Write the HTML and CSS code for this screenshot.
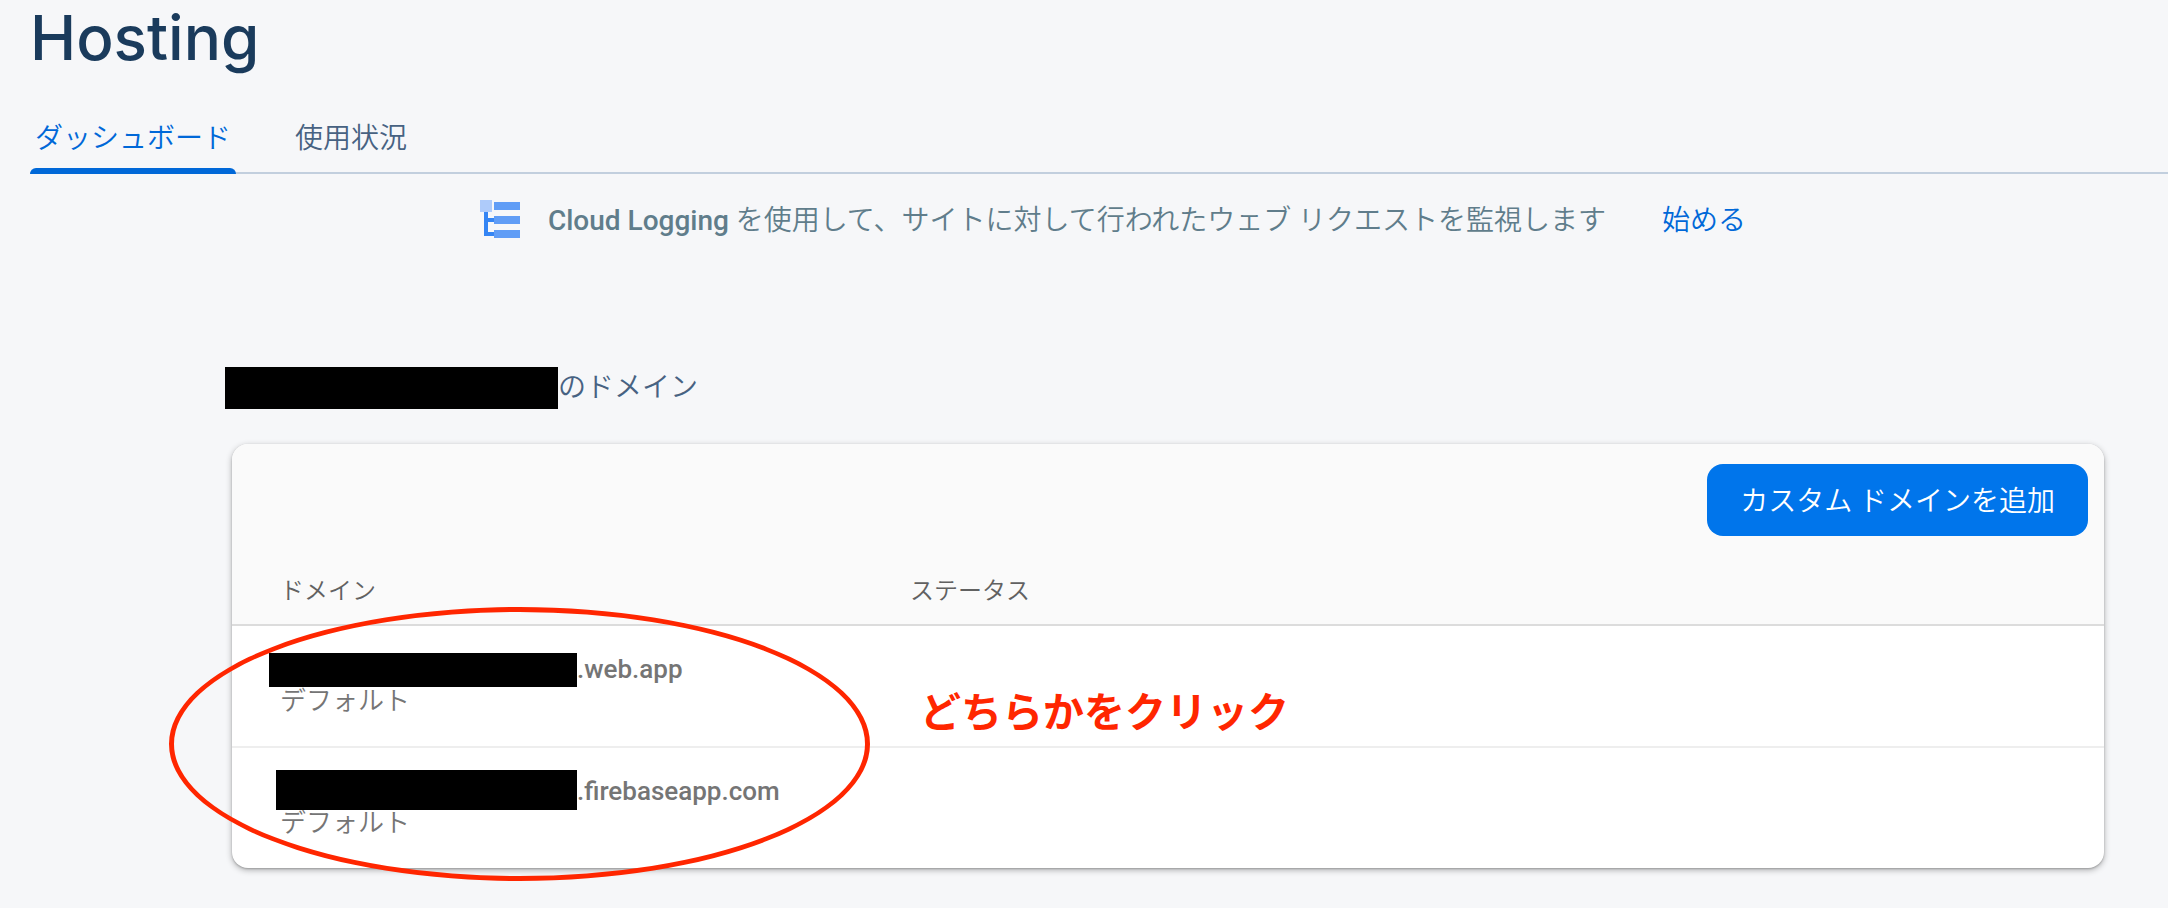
FILE: index.html
```html
<!DOCTYPE html>
<html lang="ja">
<head>
  <meta charset="UTF-8" />
  <meta name="viewport" content="width=device-width, initial-scale=1.0"/>
  <title>Hosting</title>
  <link rel="stylesheet" href="styles.css">
</head>
<body>
  <header class="header">
    <h1>Hosting</h1>
    <nav class="tabs">
      <a href="#dashboard" class="tab active">ダッシュボード</a>
      <a href="#usage" class="tab">使用状況</a>
    </nav>
  </header>

  <div class="banner">
    <svg class="banner-icon" width="40" height="38" viewBox="0 0 40 38" aria-hidden="true">
      <path d="M4 12h4v6h6v4H8v10h6v4H4z" fill="#3485f4"/>
      <path d="M0 0h12v12H0z" fill="#aecbfa"/>
      <path d="M14 2h26v8H14zM14 16h26v8H14zM14 30h26v8H14z" fill="#609df6"/>
    </svg>
    <p><strong>Cloud Logging</strong> を使用して、サイトに対して行われたウェブ リクエストを監視します</p>
    <a href="#logging">始める</a>
  </div>

  <main class="content">
    <h2><span class="project-mask"></span>のドメイン</h2>

    <div class="card">
      <div class="toolbar">
        <button type="button" class="add-button">カスタム ドメインを追加</button>
      </div>

      <table>
        <thead>
          <tr>
            <th class="col-domain">ドメイン</th>
            <th>ステータス</th>
          </tr>
        </thead>
        <tbody>
          <tr>
            <td>
              <a href="#web-app" class="domain"><span class="host"><span class="mask mask-web"></span></span>.web.app</a>
              <span class="note">デフォルト</span>
            </td>
            <td></td>
          </tr>
          <tr>
            <td>
              <a href="#firebaseapp" class="domain"><span class="host"><span class="mask mask-firebase"></span></span>.firebaseapp.com</a>
              <span class="note">デフォルト</span>
            </td>
            <td></td>
          </tr>
        </tbody>
      </table>

      <div class="circle"></div>
      <p class="callout">どちらかをクリック</p>
    </div>
  </main>
</body>
</html>
```
FILE: styles.css
```css
:root {
  --bg-color: #f6f7f9;
  --title: #1a3b5c;
  --text-color: #476282;
  --muted: #607d8b;
  --link: #0068d8;
  --primary: #0075eb;
  --mark: #ff2600;
}

* {
  box-sizing: border-box;
}

body {
  margin: 0;
  font-family: Roboto, 'Noto Sans CJK JP', sans-serif;
  font-size: 28px;
  font-weight: 350;
  background-color: var(--bg-color);
  color: var(--text-color);
}

h1, h2, p {
  margin: 0;
}

a {
  color: var(--link);
  text-decoration: none;
}

.header {
  padding-left: 30px;
}

h1 {
  margin-bottom: 44px;
  font-family: Inter, Roboto, sans-serif;
  font-size: 62px;
  font-weight: 500;
  line-height: 76px;
  color: var(--title);
}

.tabs {
  display: flex;
  gap: 54px;
  border-bottom: 2px solid #c2cfde;
}

.tab {
  position: relative;
  padding: 2px 5px 16px;
  line-height: 34px;
  color: var(--text-color);
}

.tab.active {
  color: var(--link);
}

.tab.active::after {
  content: '';
  position: absolute;
  left: 0;
  right: 0;
  bottom: -2px;
  height: 6px;
  border-radius: 6px 6px 0 0;
  background-color: var(--link);
}

.banner {
  display: flex;
  justify-content: center;
  padding: 26px 0 0 58px;
  line-height: 42px;
  color: var(--muted);
}

.banner-icon {
  flex: none;
  margin-right: 28px;
}

.banner strong {
  font-weight: 500;
}

.banner a {
  margin-left: 56px;
}

.content {
  padding: 125px 64px 40px 232px;
}

h2 {
  display: flex;
  margin: 0 0 35px -7px;
  font-size: 28px;
  font-weight: 350;
  line-height: 42px;
}

.project-mask {
  width: 333px;
  background-color: #000;
}

.card {
  position: relative;
  border-radius: 16px;
  background-color: #fff;
  box-shadow: 0 2px 6px rgba(0, 0, 0, 0.3), 0 1px 2px rgba(0, 0, 0, 0.2);
}

.toolbar {
  display: flex;
  justify-content: flex-end;
  padding: 20px 16px 0;
  border-radius: 16px 16px 0 0;
  background-color: #fafafa;
}

.add-button {
  height: 72px;
  padding: 0 33px 2px;
  border: none;
  border-radius: 16px;
  background-color: var(--primary);
  color: #fff;
  font: inherit;
  cursor: pointer;
}

table {
  width: 100%;
  border-collapse: separate;
  border-spacing: 0;
  table-layout: fixed;
}

th {
  padding: 38px 0 16px 48px;
  border-bottom: 2px solid #dcdcdc;
  background-color: #fafafa;
  color: #616161;
  font-size: 24px;
  font-weight: 350;
  line-height: 34px;
  text-align: left;
}

.col-domain {
  width: 630px;
}

td {
  padding: 28px 0 28px 48px;
  border-bottom: 2px solid #eee;
  color: #757575;
  font-size: 26px;
}

tr:last-child td {
  border-bottom: none;
}

.domain {
  display: flex;
  font-weight: 500;
  line-height: 30px;
  color: #757575;
}

.host {
  position: relative;
  width: 297px;
}

.mask {
  position: absolute;
  right: 0;
  background-color: #000;
}

.mask-web {
  top: -1px;
  width: 308px;
  height: 34px;
}

.mask-firebase {
  top: -6px;
  width: 301px;
  height: 40px;
}

.note {
  display: block;
  line-height: 34px;
}

/* hand-drawn marks over the table */
.circle {
  position: absolute;
  left: -63px;
  top: 163px;
  width: 701px;
  height: 274px;
  border: 5px solid var(--mark);
  border-radius: 50%;
  pointer-events: none;
}

.callout {
  position: absolute;
  left: 688px;
  top: 239px;
  color: var(--mark);
  font-size: 41px;
  font-weight: 700;
  line-height: 60px;
}
```
